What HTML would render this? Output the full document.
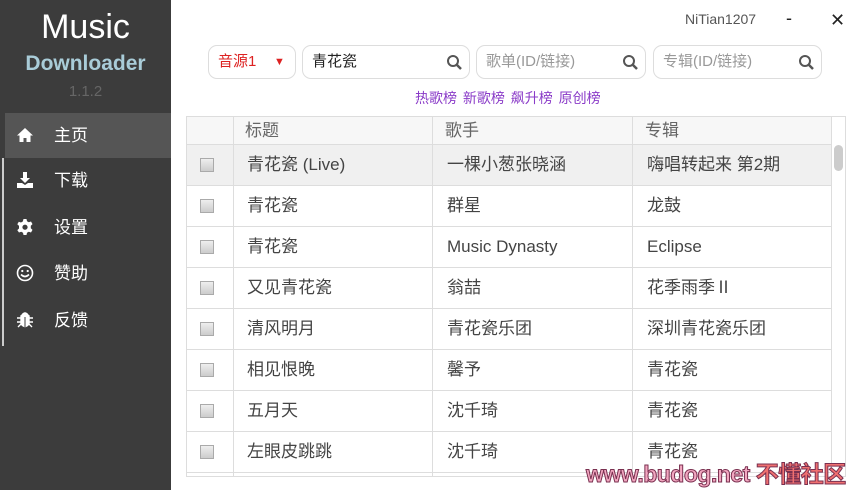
<!DOCTYPE html>
<html><head><meta charset="utf-8"><style>
*{margin:0;padding:0;box-sizing:border-box}
body{width:860px;height:490px;overflow:hidden;background:#fff;font-family:"Liberation Sans","Noto Sans CJK SC",sans-serif;position:relative}
.side{position:absolute;left:0;top:0;width:171px;height:490px;background:#3c3c3c}
.t1{position:absolute;left:0;width:171px;text-align:center;top:8px;color:#fff;font-size:34px}
.t2{position:absolute;left:0;width:171px;text-align:center;top:52px;color:#a9ccd8;font-size:21px;font-weight:bold}
.t3{position:absolute;left:0;width:171px;text-align:center;top:83px;color:#666;font-size:15px}
.item{position:absolute;left:5px;width:166px;height:45px;color:#fff;font-size:17px;line-height:45px}
.item svg{position:absolute;left:11px;top:13px}
.item .tx{position:absolute;left:49px}
.act{background:#555}
.bar{position:absolute;left:2px;top:158px;width:2px;height:188px;background:#ccc}
.a{position:absolute}
.box{position:absolute;top:45px;height:34px;border:1px solid #ddd;border-radius:9px;font-size:15px;line-height:32px;padding-left:9px}
.q{position:absolute;right:6px;top:8px}
.tbl{position:absolute;left:186px;top:116px;width:660px;height:361px;border:1px solid #ddd;overflow:hidden}
.row{position:absolute;left:0;width:645px;height:41px;border-bottom:1px solid #ddd;font-size:17px;color:#444;line-height:40px}
.row span{position:absolute}
.cb{position:absolute;left:13px;top:13px;width:14px;height:14px;border:1px solid #aaa;background:linear-gradient(#eee,#ccc)}
.vl{position:absolute;top:0;width:1px;height:361px;background:#ddd}
</style></head><body>
<div class="side">
<div class="t1">Music</div><div class="t2">Downloader</div><div class="t3">1.1.2</div>
<div class="item act" style="top:113px"><svg width="18" height="18" viewBox="0 0 18 18"><path d="M9 2L1 9.5h2.5V16h4v-4h3v4h4V9.5H17z" fill="#fff"/></svg><span class="tx">主页</span></div>
<div class="item" style="top:158px"><svg width="18" height="18" viewBox="0 0 18 18"><path d="M7 1h4v6h3l-5 5-5-5h3z M1 12h5l3 2 3-2h5v5H1z" fill="#fff"/></svg><span class="tx">下载</span></div>
<div class="item" style="top:205px"><svg width="18" height="18" viewBox="0 0 18 18"><path d="M7.5 1h3l.5 2.3 1.8 1 2.2-.8 1.5 2.6-1.7 1.6v2.6l1.7 1.6-1.5 2.6-2.2-.8-1.8 1-.5 2.3h-3l-.5-2.3-1.8-1-2.2.8L1.3 12.1 3 10.5V7.9L1.3 6.3 2.8 3.7l2.2.8 1.8-1z" fill="#fff"/><circle cx="9" cy="9.2" r="2.6" fill="#3c3c3c"/></svg><span class="tx">设置</span></div>
<div class="item" style="top:251px"><svg width="18" height="18" viewBox="0 0 18 18"><circle cx="9" cy="9" r="7.5" fill="none" stroke="#fff" stroke-width="1.6"/><circle cx="6.3" cy="7" r="1.1" fill="#fff"/><circle cx="11.7" cy="7" r="1.1" fill="#fff"/><path d="M5 10.5q4 4 8 0" fill="none" stroke="#fff" stroke-width="1.6"/></svg><span class="tx">赞助</span></div>
<div class="item" style="top:298px"><svg width="18" height="18" viewBox="0 0 18 18"><path d="M6 4q3-4 6 0z M5 5h8v8q-4 5-8 0z M1 7h4M13 7h4M1 11h4M13 11h4M2 16l3-3M16 16l-3-3" fill="#fff" stroke="#fff" stroke-width="1.4"/><path d="M9 6v10" stroke="#3c3c3c" stroke-width="1"/></svg><span class="tx">反馈</span></div>
<div class="bar"></div>
</div>
<div class="a" style="left:685px;top:11px;font-size:14px;color:#555">NiTian1207</div>
<div class="a" style="left:786px;top:8px;font-size:18px;color:#222">-</div>
<div class="a" style="left:830px;top:10px;font-size:18px;color:#222">✕</div>
<div class="box" style="left:208px;width:88px;color:#d22">音源1<span style="position:absolute;left:65px;font-size:11px">▼</span></div>
<div class="box" style="left:302px;width:168px;color:#222">青花瓷<svg class="q" width="17" height="17" viewBox="0 0 17 17"><circle cx="7" cy="7" r="5" fill="none" stroke="#555" stroke-width="2"/><path d="M10.5 10.5l4.5 4.5" stroke="#555" stroke-width="2.5"/></svg></div>
<div class="box" style="left:476px;width:170px;color:#999">歌单(ID/链接)<svg class="q" width="17" height="17" viewBox="0 0 17 17"><circle cx="7" cy="7" r="5" fill="none" stroke="#555" stroke-width="2"/><path d="M10.5 10.5l4.5 4.5" stroke="#555" stroke-width="2.5"/></svg></div>
<div class="box" style="left:653px;width:169px;color:#999">专辑(ID/链接)<svg class="q" width="17" height="17" viewBox="0 0 17 17"><circle cx="7" cy="7" r="5" fill="none" stroke="#555" stroke-width="2"/><path d="M10.5 10.5l4.5 4.5" stroke="#555" stroke-width="2.5"/></svg></div>
<div class="a" style="left:415px;top:88px;font-size:14px;color:#8a3bc8;word-spacing:2px">热歌榜 新歌榜 飙升榜 原创榜</div>
<div class="tbl">
<div class="row" style="top:0;height:28px;background:#f7f7f7;line-height:27px;color:#666"><span style="left:58px">标题</span><span style="left:258px">歌手</span><span style="left:458px">专辑</span></div>
<div class="row" style="top:28px;background:#f0f0f0"><div class="cb"></div><span style="left:60px">青花瓷 (Live)</span><span style="left:260px">一棵小葱张晓涵</span><span style="left:460px">嗨唱转起来 第2期</span></div>
<div class="row" style="top:69px"><div class="cb"></div><span style="left:60px">青花瓷</span><span style="left:260px">群星</span><span style="left:460px">龙鼓</span></div>
<div class="row" style="top:110px"><div class="cb"></div><span style="left:60px">青花瓷</span><span style="left:260px">Music Dynasty</span><span style="left:460px">Eclipse</span></div>
<div class="row" style="top:151px"><div class="cb"></div><span style="left:60px">又见青花瓷</span><span style="left:260px">翁喆</span><span style="left:460px">花季雨季Ⅱ</span></div>
<div class="row" style="top:192px"><div class="cb"></div><span style="left:60px">清风明月</span><span style="left:260px">青花瓷乐团</span><span style="left:460px">深圳青花瓷乐团</span></div>
<div class="row" style="top:233px"><div class="cb"></div><span style="left:60px">相见恨晚</span><span style="left:260px">馨予</span><span style="left:460px">青花瓷</span></div>
<div class="row" style="top:274px"><div class="cb"></div><span style="left:60px">五月天</span><span style="left:260px">沈千琦</span><span style="left:460px">青花瓷</span></div>
<div class="row" style="top:315px"><div class="cb"></div><span style="left:60px">左眼皮跳跳</span><span style="left:260px">沈千琦</span><span style="left:460px">青花瓷</span></div>
<div class="vl" style="left:46px"></div><div class="vl" style="left:245px"></div><div class="vl" style="left:445px"></div><div class="vl" style="left:644px"></div>
<div class="a" style="left:647px;top:28px;width:9px;height:26px;border-radius:5px;background:#ccc"></div>
</div>
<div class="a" style="left:586px;top:455px;font-size:23px;font-weight:bold;color:#f2a7c0;-webkit-text-stroke:1px #7a3050;letter-spacing:-0.5px;white-space:nowrap">www.budog.net <span style="color:#f07070">不懂社区</span></div>
</body></html>
